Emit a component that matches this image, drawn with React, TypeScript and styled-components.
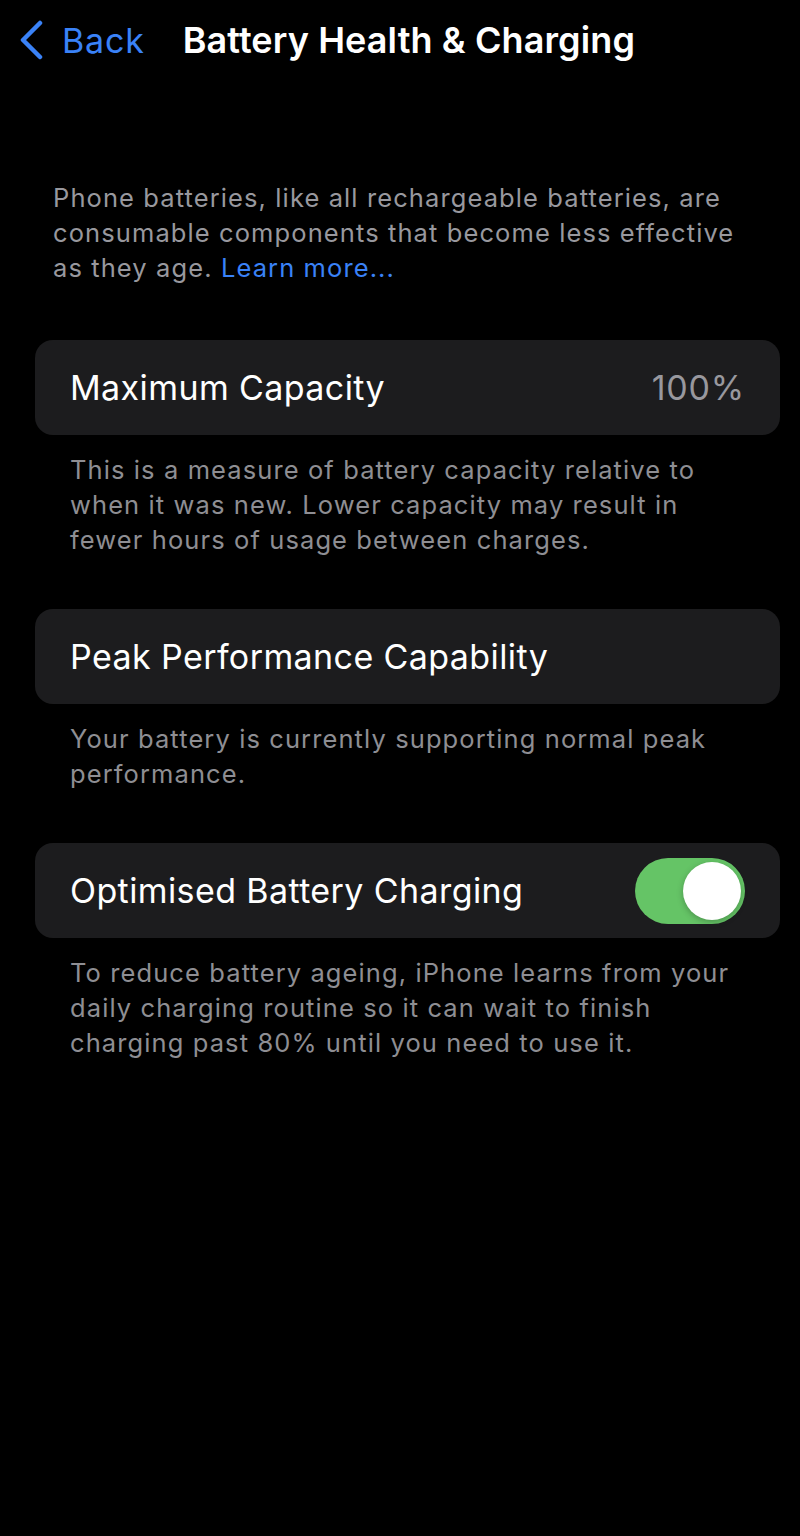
import styled, { createGlobalStyle } from "styled-components";

const GlobalStyle = createGlobalStyle`
  html, body {
    margin: 0;
    padding: 0;
    background: #000;
  }
  body {
    font-family: Inter, "Noto Sans", sans-serif;
    -webkit-font-smoothing: antialiased;
  }
`;

const Screen = styled.div`
  width: 800px;
  min-height: 1536px;
  background: #000;
  color: #fff;
`;

const NavBar = styled.div`
  display: flex;
  align-items: center;
  height: 80px;
  padding-left: 18px;
`;

const BackButton = styled.button`
  display: flex;
  align-items: center;
  gap: 18px;
  background: none;
  border: none;
  padding: 0;
  color: #3a82f7;
  font-family: inherit;
  font-size: 34px;
  letter-spacing: 0.8px;
  cursor: pointer;
`;

const Title = styled.h1`
  margin: 0 0 0 38px;
  font-size: 36px;
  font-weight: 600;
  letter-spacing: 0.1px;
  color: #fff;
`;

const Content = styled.div`
  display: flex;
  flex-direction: column;
  padding: 100px 20px 0 35px;
`;

const Intro = styled.p`
  margin: 0 30px 55px 18px;
  font-size: 25.5px;
  line-height: 35px;
  color: #98989e;
  letter-spacing: 1.1px;
`;

const Link = styled.a`
  color: #3a82f7;
  text-decoration: none;
`;

const Card = styled.div`
  display: flex;
  align-items: center;
  justify-content: space-between;
  height: 95px;
  padding: 0 35px;
  background: #1c1c1e;
  border-radius: 18px;
`;

const Label = styled.span`
  font-size: 34px;
  color: #fff;
  letter-spacing: 0.4px;
`;

const Value = styled.span`
  font-size: 34px;
  color: #98989e;
  letter-spacing: 0.8px;
`;

const Footer = styled.p`
  margin: 17px 40px 52px 35px;
  font-size: 25.5px;
  line-height: 35px;
  color: #8e8e93;
  letter-spacing: 1.1px;
`;

const Toggle = styled.div<{ $on: boolean }>`
  position: relative;
  width: 110px;
  height: 66px;
  border-radius: 33px;
  background: ${(p) => (p.$on ? "#65c466" : "#39393d")};
  flex-shrink: 0;
`;

const Knob = styled.span<{ $on: boolean }>`
  position: absolute;
  top: 4px;
  left: ${(p) => (p.$on ? "48px" : "4px")};
  width: 58px;
  height: 58px;
  border-radius: 50%;
  background: #fff;
  box-shadow: 0 2px 6px rgba(0, 0, 0, 0.25);
`;

const Chevron = () => (
  <svg width="26" height="40" viewBox="0 0 26 40" fill="none">
    <path
      d="M22 3 L5 20 L22 37"
      stroke="#3a82f7"
      strokeWidth="4.5"
      strokeLinecap="round"
      strokeLinejoin="round"
    />
  </svg>
);

export default function App() {
  return (
    <>
      <GlobalStyle />
      <Screen>
        <NavBar>
          <BackButton>
            <Chevron />
            Back
          </BackButton>
          <Title>Battery Health &amp; Charging</Title>
        </NavBar>
        <Content>
          <Intro>
            Phone batteries, like all rechargeable batteries, are consumable
            components that become less effective as they age.{" "}
            <Link href="#">Learn more...</Link>
          </Intro>

          <Card>
            <Label>Maximum Capacity</Label>
            <Value>100%</Value>
          </Card>
          <Footer>
            This is a measure of battery capacity relative to when it was new.
            Lower capacity may result in fewer hours of usage between charges.
          </Footer>

          <Card>
            <Label>Peak Performance Capability</Label>
          </Card>
          <Footer>
            Your battery is currently supporting normal peak performance.
          </Footer>

          <Card>
            <Label>Optimised Battery Charging</Label>
            <Toggle $on>
              <Knob $on />
            </Toggle>
          </Card>
          <Footer>
            To reduce battery ageing, iPhone learns from your daily charging
            routine so it can wait to finish charging past 80% until you need
            to use it.
          </Footer>
        </Content>
      </Screen>
    </>
  );
}
